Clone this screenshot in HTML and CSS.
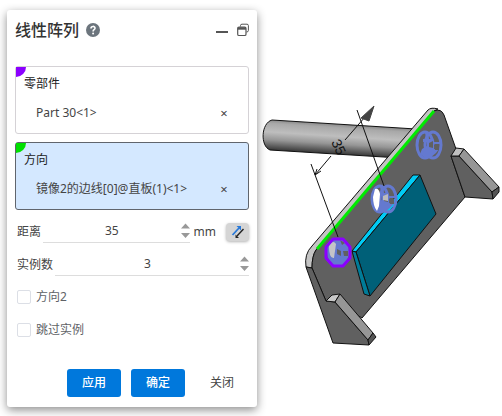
FILE: index.html
```html
<!DOCTYPE html>
<html lang="zh-CN">
<head>
<meta charset="utf-8">
<title>线性阵列</title>
<link rel="stylesheet" href="styles.css">
</head>
<body>
<main class="workspace">
  <form class="panel">
    <header class="panel-header">
      <h1>线性阵列</h1>
      <button type="button" class="icon-button help" aria-label="帮助">
        <svg width="14" height="14" viewBox="0 0 14 14"><circle cx="7" cy="7" r="7" fill="#6c757d"/><path d="M5 5.4C5 2.8 9 2.8 9 5.2C9 6.8 7.1 6.6 7.1 8.4" fill="none" stroke="#fff" stroke-width="1.6"/><circle cx="7.1" cy="10.5" r="1" fill="#fff"/></svg>
      </button>
      <span class="spacer"></span>
      <button type="button" class="icon-button" aria-label="最小化">
        <svg width="12" height="14" viewBox="0 0 12 14"><path d="M0 9H12" stroke="#555" stroke-width="2"/></svg>
      </button>
      <button type="button" class="icon-button" aria-label="还原">
        <svg width="12" height="14" viewBox="0 0 12 14" fill="none" stroke="#555"><path d="M3.5 3.5V2.5Q3.5 1.2 5 1.2H10Q11.4 1.2 11.4 2.6V7.5Q11.4 9 9.5 9"/><rect x=".7" y="4.2" width="8.3" height="8.3" rx="1.3" stroke-width="1.2"/><path d="M.7 5.5H9" stroke-width="2.4"/></svg>
      </button>
    </header>

    <section class="selection purple">
      <h2>零部件</h2>
      <div class="item"><span>Part 30&lt;1&gt;</span><button type="button" class="remove" aria-label="移除">×</button></div>
    </section>
    <section class="selection green active">
      <h2>方向</h2>
      <div class="item"><span>镜像2的边线[0]@直板(1)&lt;1&gt;</span><button type="button" class="remove" aria-label="移除">×</button></div>
    </section>

    <div class="field">
      <label for="distance">距离</label>
      <div class="number">
        <input id="distance" type="text" inputmode="numeric" value="35">
        <svg class="stepper" width="9" height="16" viewBox="0 0 9 16"><path d="M0 5.5L4.5 .5L9 5.5ZM0 10L4.5 15L9 10Z"/></svg>
      </div>
      <span class="unit">mm</span>
      <button type="button" class="reverse" aria-label="反向">
        <svg width="14" height="14" viewBox="0 0 14 14" fill="none"><path d="M1.500 10L8 3" stroke="#2878d8" stroke-width="1.8"/><path d="M5.5 1H10V5.5Z" fill="#2878d8"/><path d="M12.500 4L6 11" stroke="#222" stroke-width="1.4"/><path d="M4.500 9.500V13H8Z" fill="#222"/></svg>
      </button>
    </div>
    <div class="field">
      <label for="count">实例数</label>
      <div class="number">
        <input id="count" type="text" inputmode="numeric" value="3">
        <svg class="stepper" width="9" height="16" viewBox="0 0 9 16"><path d="M0 5.5L4.5 .5L9 5.5ZM0 10L4.5 15L9 10Z"/></svg>
      </div>
    </div>
    <label class="check"><input type="checkbox">方向2</label>
    <label class="check"><input type="checkbox">跳过实例</label>

    <footer class="actions">
      <button type="button" class="primary">应用</button>
      <button type="submit" class="primary">确定</button>
      <button type="button" class="plain">关闭</button>
    </footer>
  </form>

  <svg class="model" viewBox="257 0 245 416" preserveAspectRatio="xMinYMin meet" role="img" aria-label="模型视图">
    <defs>
      <linearGradient id="tube" gradientUnits="userSpaceOnUse" x1="340" y1="124" x2="338" y2="155">
        <stop offset="0" stop-color="#888"/><stop offset=".12" stop-color="#a8a8a8"/><stop offset=".4" stop-color="#bebebe"/><stop offset=".65" stop-color="#969696"/><stop offset="1" stop-color="#303030"/>
      </linearGradient>
      <g id="bush">
        <ellipse cx="-4" rx="8" ry="13" fill="none" stroke="#6479cf" stroke-width="3"/>
        <ellipse cx="4" rx="8" ry="13" fill="none" stroke="#6479cf" stroke-width="3"/>
        <path fill="#6479cf" d="M-4-13H-1L0-6H4L5-3H11V-1H5V4H10L7 8L1 13H-4L-9 9L-7 4L-2 1V-3H-6V-6H-3Z"/>
        <path fill="#606060" d="M0-2L4-4V3L0 2ZM5 0H10V5H6Z"/>
      </g>
    </defs>
    <g stroke="#111" stroke-width="1" stroke-linejoin="round">
      <path d="M272 120L416 129L400 158L270 150C260 146 261 123 272 120Z" fill="url(#tube)"/>
      <path d="M312 246L428 110Q431 107 438 109L434 111L316 250Q312 256 312 268L306 267Q304 254 312 246Z" fill="#c4c4c4"/>
      <path d="M434 111Q441 108 444 115L456 149L451 156L465 197L362 318L335 302L326 301L312 268Q312 256 316 250Z" fill="#606060"/>
      <path d="M306 267L312 268L326 301L335 302L368 340L369 345L333 343Z" fill="#606060"/>
      <path d="M326 301L332 295L340 294L335 302Z" fill="#c8c8c8"/>
      <path d="M335 302L340 294L373 333L368 340Z" fill="#969696"/>
      <path d="M368 340L373 333L376 337L369 345Z" fill="#555"/>
      <path d="M451 156L459 156L492 192L493 199L465 197Z" fill="#606060"/>
      <path d="M451 156L456 148L464 149L459 156Z" fill="#c0c0c0"/>
      <path d="M459 156L464 149L499 187L492 192Z" fill="#969696"/>
      <path d="M492 192L499 187L499 192L493 199Z" fill="#555"/>
      <path d="M352 251L413 175H420L356 252Z" fill="#00cbf5"/>
      <path d="M356 252L420 175L436 214L370 296Z" fill="#006078"/>
      <path d="M352 251L356 252L370 296L364 294Z" fill="#007c98"/>
    </g>
    <path d="M317 249L434 111" stroke="#00eb00" stroke-width="3"/>
    <use href="#bush" x="429" y="145"/>
    <use href="#bush" x="384" y="199"/>
    <path d="M375 189Q379 188 380 194L379 206L377 211Q373 206 373 197Z" fill="#fff"/>
    <path d="M383 196L388 194V201L383 200Z" fill="#bbb"/>
    <g>
      <ellipse cx="338" cy="252" rx="11" ry="14" fill="#6479cf"/>
      <path d="M329 246Q333 239 336 244L334 258Q329 259 329 246Z" fill="#c4c4c8"/>
      <path d="M337 249L341 251V256L337 254ZM343 251H348V256H344ZM340 240L345 243L342 245Z" fill="#606060"/>
      <path d="M333 239H343L350 247V258L343 266H333L326 258V247Z" fill="none" stroke="#8b00ff" stroke-width="3" stroke-linejoin="round"/>
    </g>
    <g stroke="#111" fill="none">
      <path d="M311 164L338 237M357 110L384 186M315 175L331 156M345 140L365 117M315 175L317 169M315 175L321 171"/>
      <path d="M361 118L374 106L369 121Z" fill="#444" stroke="#444"/>
    </g>
    <text x="331" y="142" transform="rotate(65 331 142)" class="dimension">35</text>
  </svg>
</main>
</body>
</html>
```
FILE: styles.css
```css
* { box-sizing: border-box; }
body {
  margin: 0;
  background: #fff;
  color: #444;
  font: 12px/18px "Noto Sans", "Noto Sans CJK SC", sans-serif;
}
button, input { font: inherit; color: inherit; }
button { border: 0; padding: 0; background: none; }
h1, h2 { margin: 0; font-weight: 400; }
.workspace { display: flex; align-items: flex-start; padding-left: 7px; }
.panel {
  flex: 0 0 250px;
  min-width: 0;
  display: flex;
  flex-direction: column;
  margin-top: 10px;
  padding: 8px 8px 10px;
  background: #fff;
  border-radius: 3px;
  box-shadow: 0 3px 10px rgba(0, 0, 0, .45);
}
.panel-header { display: flex; align-items: center; gap: 9px; height: 24px; margin-bottom: 24px; }
h1 { font-size: 16px; line-height: 24px; font-weight: 500; color: #333; }
.icon-button { display: flex; }
.help { margin-left: -2px; }
.spacer { flex: 1; }
.selection {
  position: relative;
  height: 68px;
  margin-bottom: 8px;
  padding: 7px 8px;
  border: 1px solid #d5d2d6;
  border-radius: 3px;
}
.selection::before {
  content: "";
  position: absolute;
  top: 0;
  left: 0;
  width: 10px;
  height: 10px;
  border-bottom-right-radius: 10px;
}
.purple::before { background: #8b00ff; }
.green::before { background: #00e000; }
.active { background: #d4e8ff; border-color: #60656d; }
h2 { font-size: 12px; line-height: 20px; color: #222; }
.item { display: flex; justify-content: space-between; padding: 0 8px 0 12px; margin-top: 10px; }
.remove { width: 16px; font-size: 13px; }
.field { display: flex; align-items: center; height: 25px; margin: 1px 0 7px; padding-left: 2px; }
.number {
  flex: 1;
  display: flex;
  align-items: center;
  min-width: 0;
  height: 23px;
  margin-left: 2px;
  border-bottom: 1px solid #ddd;
}
.number input { flex: 1; width: 100%; min-width: 0; padding: 0; border: 0; background: none; text-align: center; outline: 0; }
.stepper { flex: none; fill: #999; }
.unit { margin: 0 10px 0 4px; }
.reverse {
  display: grid;
  place-items: center;
  width: 23px;
  height: 18px;
  border-radius: 4px;
  background: #d5d5d5;
  box-shadow: 0 1px 3px rgba(0, 0, 0, .3);
}
.check { display: flex; align-items: center; gap: 5px; height: 26px; margin-bottom: 7px; padding-left: 2px; color: #606266; }
.check input { appearance: none; width: 14px; height: 14px; margin: 0; border: 1px solid #dcdfe6; border-radius: 2px; }
.actions { display: flex; justify-content: flex-end; gap: 10px; margin-top: 19px; }
.actions button { width: 54px; height: 28px; border-radius: 3px; }
.primary { background: #0078dc; color: #fff; font-weight: 500; }
.model { flex: 1; min-width: 0; }
.dimension { font: 14px "Liberation Sans", sans-serif; fill: #111; }
```
